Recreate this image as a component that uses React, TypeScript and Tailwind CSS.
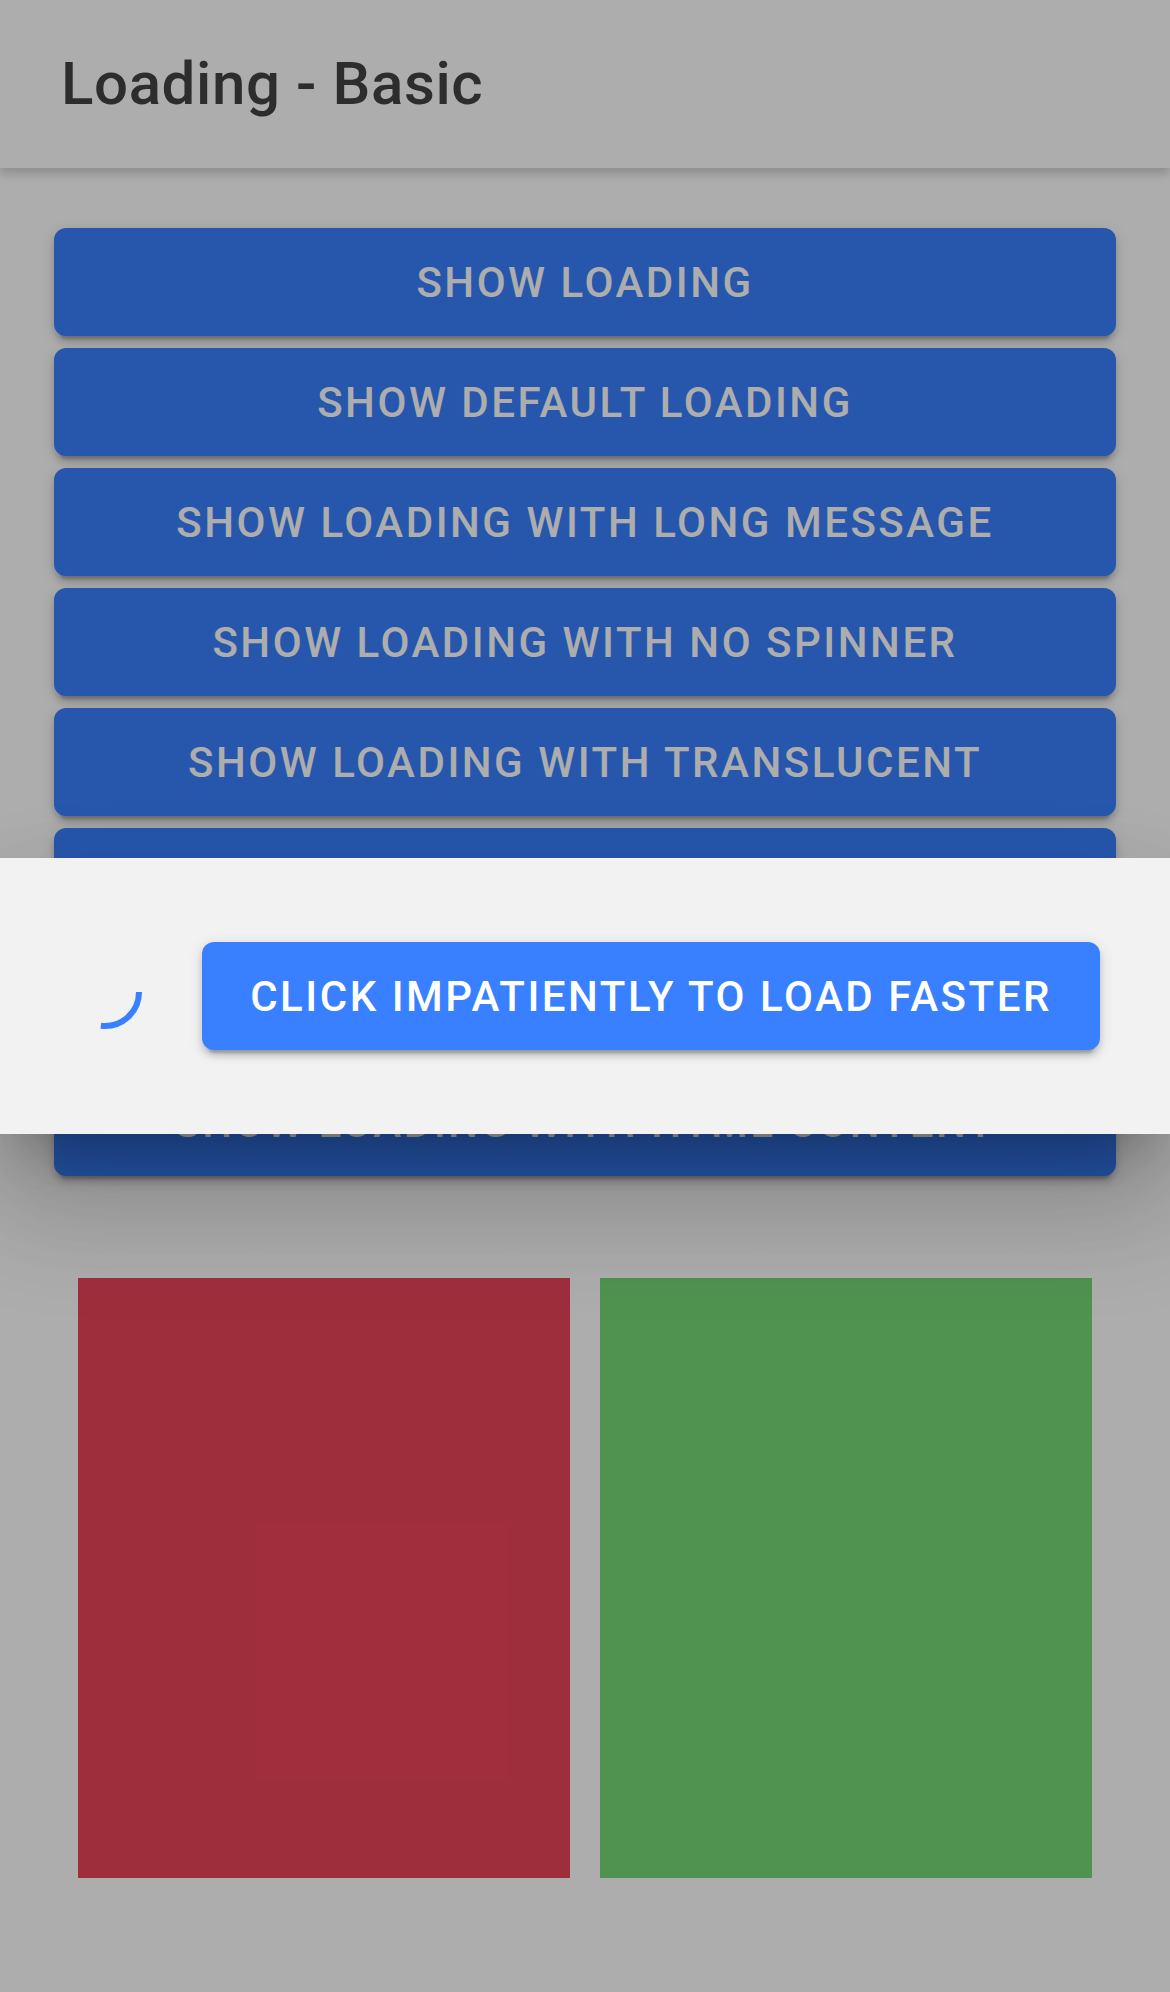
import React from "react";

const buttons = [
  "Show Loading",
  "Show Default Loading",
  "Show Loading with long message",
  "Show Loading with no spinner",
  "Show Loading with translucent",
  "Show Loading with custom class",
  "Show Loading with backdrop click",
  "Show Loading with html content",
];

function Spinner() {
  return (
    <svg width="84" height="84" viewBox="0 0 84 84" className="shrink-0">
      <path
        d="M 76 38 A 34 34 0 0 1 37.86 71.75"
        fill="none"
        stroke="#3880ff"
        strokeWidth="6"
      />
    </svg>
  );
}

export default function App() {
  return (
    <div
      className="relative w-[1170px] h-[1992px] overflow-hidden bg-white"
      style={{ fontFamily: "Roboto, 'Noto Sans', sans-serif" }}
    >
      <header className="relative z-10 h-[168px] flex items-center pl-[61px] bg-white shadow-[0_6px_9px_rgba(0,0,0,0.18)]">
        <h1 className="text-[60px] font-medium text-[#434343] tracking-[0.01em]">
          Loading - Basic
        </h1>
      </header>

      <main className="pt-[60px] px-[54px]">
        <div className="flex flex-col gap-[12px]">
          {buttons.map((label) => (
            <button
              key={label}
              type="button"
              className="h-[108px] rounded-[12px] bg-[#3880ff] text-white text-[42px] font-medium uppercase tracking-[0.06em] shadow-[0_9px_3px_-6px_rgba(0,0,0,0.2),0_6px_6px_0_rgba(0,0,0,0.14),0_3px_15px_0_rgba(0,0,0,0.12)]"
            >
              {label}
            </button>
          ))}
        </div>

        <div className="mt-[102px] px-[24px] grid grid-cols-2 gap-[30px]">
          <div className="h-[600px] bg-[#eb445a]" />
          <div className="h-[600px] bg-[#76d876]" />
        </div>
      </main>

      {/* loading overlay */}
      <div className="absolute inset-0 z-20 flex items-center bg-black/[0.32]">
        <div className="w-full h-[276px] flex items-center pl-[63px] pr-[70px] gap-[55px] bg-[#f2f2f2] shadow-[0_33px_45px_-21px_rgba(0,0,0,0.2),0_72px_114px_9px_rgba(0,0,0,0.14),0_40px_110px_0_rgba(0,0,0,0.12)]">
          <Spinner />
          <button
            type="button"
            className="flex-1 h-[108px] rounded-[12px] bg-[#3880ff] text-white text-[42px] font-medium uppercase tracking-[0.06em] shadow-[0_9px_3px_-6px_rgba(0,0,0,0.2),0_6px_6px_0_rgba(0,0,0,0.14),0_3px_15px_0_rgba(0,0,0,0.12)]"
          >
            Click impatiently to load faster
          </button>
        </div>
      </div>
    </div>
  );
}
